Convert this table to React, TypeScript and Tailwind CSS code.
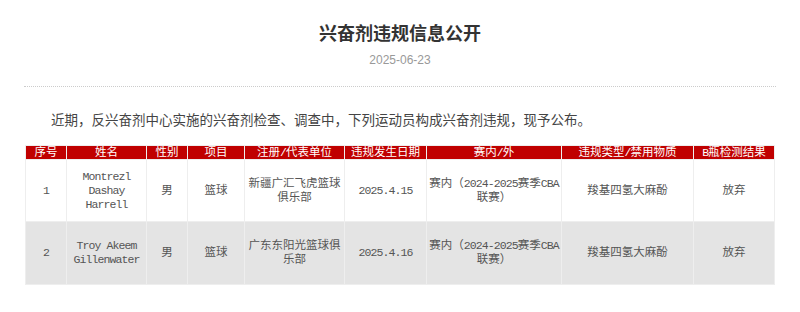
import React from "react";

const COLUMNS = [
  { label: "序号", width: "w-[41px]" },
  { label: "姓名", width: "w-[80px]" },
  { label: "性别", width: "w-[41px]" },
  { label: "项目", width: "w-[57px]" },
  { label: "注册/代表单位", width: "w-[100px]" },
  { label: "违规发生日期", width: "w-[82px]" },
  { label: "赛内/外", width: "w-[135px]" },
  { label: "违规类型/禁用物质", width: "w-[132px]" },
  { label: "B瓶检测结果", width: "w-[81px]" },
];

const ROWS = [
  {
    shaded: false,
    height: "h-[62px]",
    cells: [
      ["1"],
      ["Montrezl", "Dashay", "Harrell"],
      ["男"],
      ["篮球"],
      ["新疆广汇飞虎篮球", "俱乐部"],
      ["2025.4.15"],
      ["赛内（2024-2025赛季CBA", "联赛）"],
      ["羧基四氢大麻酚"],
      ["放弃"],
    ],
  },
  {
    shaded: true,
    height: "h-[63px]",
    cells: [
      ["2"],
      ["Troy Akeem", "Gillenwater"],
      ["男"],
      ["篮球"],
      ["广东东阳光篮球俱", "乐部"],
      ["2025.4.16"],
      ["赛内（2024-2025赛季CBA", "联赛）"],
      ["羧基四氢大麻酚"],
      ["放弃"],
    ],
  },
];

// latin runs are narrowed so they sit at half the width of a CJK glyph
function MixedText({ text }: { text: string }) {
  const parts = text.split(/([\x20-\x7e]+)/).filter(Boolean);
  return (
    <>
      {parts.map((p, i) =>
        /^[\x20-\x7e]+$/.test(p) ? (
          <span key={i} className="tracking-[-0.9px]">
            {p}
          </span>
        ) : (
          <span key={i}>{p}</span>
        ),
      )}
    </>
  );
}

export default function App() {
  return (
    <div className="w-[800px] h-[312px] bg-white font-['Noto_Sans_CJK_SC',sans-serif]">
      <h1 className="pt-[21px] text-center text-[18px] leading-[22px] font-bold text-[#333]">
        兴奋剂违规信息公开
      </h1>
      <div className="mt-[9px] text-center text-[12px] leading-[16px] text-[#999] font-['Liberation_Sans','Noto_Sans_CJK_SC',sans-serif]">
        2025-06-23
      </div>

      <div className="mx-[24px] mt-[18px] border-t border-dotted border-[#ccc]" />

      <p className="mx-[24px] mt-[22px] indent-[27px] text-[13.5px] leading-[20px] text-[#444]">
        近期，反兴奋剂中心实施的兴奋剂检查、调查中，下列运动员构成兴奋剂违规，现予公布。
      </p>

      <table className="ml-[25px] mt-[16px] w-[749px] table-fixed border-collapse text-[11.5px] font-['Liberation_Mono','Noto_Sans_CJK_SC',monospace]">
        <thead>
          <tr className="h-[14px] bg-[#c00000] text-white">
            {COLUMNS.map((c) => (
              <th
                key={c.label}
                className={`${c.width} border border-[#eee] p-0 text-center font-normal leading-[13px] whitespace-nowrap overflow-hidden`}
              >
                <MixedText text={c.label} />
              </th>
            ))}
          </tr>
        </thead>
        <tbody>
          {ROWS.map((row, r) => (
            <tr key={r} className={`${row.height} ${row.shaded ? "bg-[#e4e4e4]" : "bg-white"} text-[#555]`}>
              {row.cells.map((lines, c) => (
                <td key={c} className="border border-[#eee] p-0 text-center align-middle leading-[14px]">
                  {lines.map((line, i) => (
                    <div key={i} className="whitespace-nowrap">
                      <MixedText text={line} />
                    </div>
                  ))}
                </td>
              ))}
            </tr>
          ))}
        </tbody>
      </table>
    </div>
  );
}
